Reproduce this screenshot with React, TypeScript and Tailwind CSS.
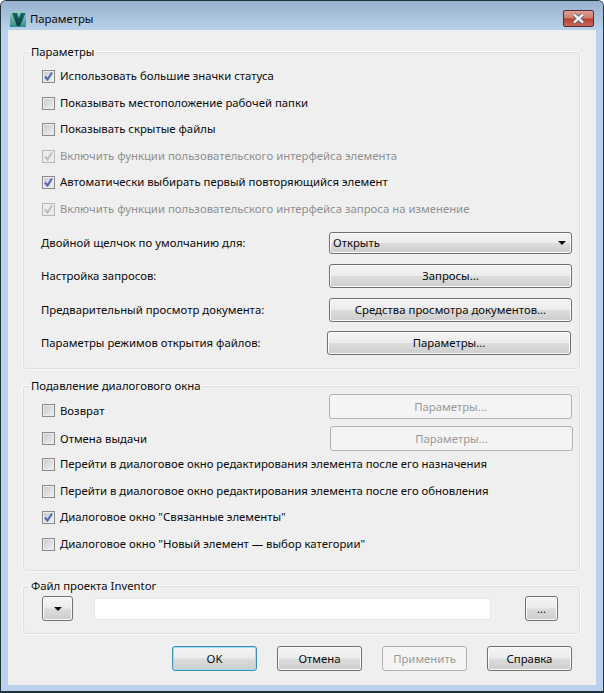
const btnFace =
  "bg-[linear-gradient(to_bottom,#f4f4f4_0%,#ececec_48%,#dcdcdc_52%,#cdcdcd_100%)] shadow-[inset_0_0_0_1px_#fafafa]"

function CheckRow({ label, checked, disabled, className }: { label: string; checked?: boolean; disabled?: boolean; className: string }) {
  return (
    <div className={`flex items-center pl-[18px] ${className}`}>
      <span
        className={`flex h-[13px] w-[13px] shrink-0 items-center justify-center border ${
          disabled ? "border-[#b8b8b8] bg-[#ececec]" : "border-[#8a8a8a] bg-[linear-gradient(135deg,#c9c9cf,#f0f0f2)] shadow-[inset_0_0_0_1px_#ececec]"
        }`}
      >
        {checked && (
          <svg width="11" height="11" viewBox="0 0 11 11" fill="none">
            <path d="M2 5.5 L4.5 8.5 L9 1.5" stroke={disabled ? "#bdbdbd" : "#4f68b5"} strokeWidth="2" />
          </svg>
        )}
      </span>
      <span className={`ml-[5px] ${disabled ? "text-[#8f8f8f]" : "text-[#0b0b0b]"}`}>{label}</span>
    </div>
  )
}

function Btn({ label, className, disabled, primary }: { label: string; className: string; disabled?: boolean; primary?: boolean }) {
  const look = disabled
    ? "border-[#adb2b5] bg-[#f4f4f4] text-[#9a9a9a]"
    : primary
      ? "border-[#3a8fbd] text-[#0b0b0b] bg-[linear-gradient(to_bottom,#f4f4f4_0%,#ececec_48%,#dcdcdc_52%,#cdcdcd_100%)] shadow-[inset_0_0_0_1px_#9fdcf2]"
      : `border-[#707070] text-[#0b0b0b] ${btnFace}`
  return <div className={`flex items-center justify-center rounded-[3px] border ${look} ${className}`}>{label}</div>
}

function FormRow({ label, children, className }: { label: string; children: React.ReactNode; className: string }) {
  return (
    <div className={`flex items-center pl-[17px] ${className}`}>
      <span className="flex-1 text-[#0b0b0b]">{label}</span>
      {children}
    </div>
  )
}

function Group({ title, className, children }: { title: string; className: string; children: React.ReactNode }) {
  return (
    <fieldset className={`ml-[15px] mr-[16px] rounded-[3px] border border-[#dcdfe3] shadow-[0_0_0_1px_#fafafa] ${className}`}>
      <legend className="ml-[5px] px-[2px] leading-[16px] text-[#0b0b0b]">{title}</legend>
      {children}
    </fieldset>
  )
}

export default function App() {
  return (
    <div className="flex h-[693px] w-[604px] flex-col overflow-hidden rounded-t-[6px] border border-b-2 border-[#22343c] bg-[#b9d1ea] font-['Noto_Sans',sans-serif] text-[11.35px] leading-[16px]">
      <div className="flex h-[29px] shrink-0 items-start bg-[linear-gradient(to_bottom,#98b1cd,#b9d1ea)] pl-[9px] pr-[9px] pt-[9px]">
        <svg width="16" height="16" viewBox="0 0 16 16" className="mt-px shrink-0">
          <defs>
            <linearGradient id="logo" x1="0" y1="0" x2="0" y2="1">
              <stop offset="0" stopColor="#a9c9c6" />
              <stop offset="1" stopColor="#2f8f88" />
            </linearGradient>
            <linearGradient id="logo-v" x1="0" y1="0" x2="0" y2="1">
              <stop offset="0" stopColor="#0f6a68" />
              <stop offset="1" stopColor="#0a3c3e" />
            </linearGradient>
          </defs>
          <rect width="16" height="16" fill="url(#logo)" />
          <path d="M2 2 H7 L8.8 7.5 L10.8 2 H15.5 L9.8 15 H7 Z" fill="url(#logo-v)" />
        </svg>
        <span className="ml-[4px] mt-px text-[#0b0b0b]">Параметры</span>
        <div className="ml-auto flex h-[17px] w-[31px] items-center justify-center rounded-[2px] border border-[#5a2a30] bg-[linear-gradient(to_bottom,#e0a194_0%,#cf7b6c_48%,#b5402f_52%,#c9695a_100%)]">
          <svg width="13" height="11" viewBox="0 0 13 11">
            <path d="M2 1.5 L11 9.5 M11 1.5 L2 9.5" stroke="#4e5766" strokeWidth="4" />
            <path d="M2 1.5 L11 9.5 M11 1.5 L2 9.5" stroke="#eef0f4" strokeWidth="2.4" />
          </svg>
        </div>
      </div>

      <div className="mx-[7px] flex h-[655px] shrink-0 flex-col bg-[#efefef] pt-[14px]">
        <Group title="Параметры" className="h-[325px]">
          <CheckRow label="Использовать большие значки статуса" checked className="mt-[8px] h-[16px]" />
          <CheckRow label="Показывать местоположение рабочей папки" className="mt-[11px] h-[16px]" />
          <CheckRow label="Показывать скрытые файлы" className="mt-[10px] h-[16px]" />
          <CheckRow label="Включить функции пользовательского интерфейса элемента" checked disabled className="mt-[11px] h-[16px]" />
          <CheckRow label="Автоматически выбирать первый повторяющийся элемент" checked className="mt-[10px] h-[16px]" />
          <CheckRow label="Включить функции пользовательского интерфейса запроса на изменение" checked disabled className="mt-[11px] h-[16px]" />
          <FormRow label="Двойной щелчок по умолчанию для:" className="mt-[15px] h-[22px] pr-[7px]">
            <div className={`flex h-[22px] w-[243px] items-center rounded-[3px] border border-[#707070] pl-[3px] pr-[5px] text-[#0b0b0b] ${btnFace}`}>
              <span className="flex-1">Открыть</span>
              <span className="h-0 w-0 border-x-[4px] border-t-[4px] border-x-transparent border-t-[#111]" />
            </div>
          </FormRow>
          <FormRow label="Настройка запросов:" className="mt-[10px] h-[24px] pr-[7px]">
            <Btn label="Запросы..." className="h-[24px] w-[243px]" />
          </FormRow>
          <FormRow label="Предварительный просмотр документа:" className="mt-[10px] h-[24px] pr-[7px]">
            <Btn label="Средства просмотра документов..." className="h-[24px] w-[243px]" />
          </FormRow>
          <FormRow label="Параметры режимов открытия файлов:" className="mt-[9px] h-[24px] pr-[8px]">
            <Btn label="Параметры..." className="h-[24px] w-[244px]" />
          </FormRow>
        </Group>

        <Group title="Подавление диалогового окна" className="mt-[9px] h-[193px]">
          <div className="flex h-[25px] items-center pr-[7px]">
            <CheckRow label="Возврат" className="mt-[8px] h-[16px] flex-1" />
            <Btn label="Параметры..." disabled className="h-[25px] w-[243px]" />
          </div>
          <div className="mt-[7px] flex h-[25px] items-center pr-[6px]">
            <CheckRow label="Отмена выдачи" className="h-[16px] flex-1" />
            <Btn label="Параметры..." disabled className="h-[25px] w-[243px]" />
          </div>
          <CheckRow label="Перейти в диалоговое окно редактирования элемента после его назначения" className="mt-[5px] h-[16px]" />
          <CheckRow label="Перейти в диалоговое окно редактирования элемента после его обновления" className="mt-[11px] h-[16px]" />
          <CheckRow label='Диалоговое окно "Связанные элементы"' checked className="mt-[10px] h-[16px]" />
          <CheckRow label='Диалоговое окно "Новый элемент — выбор категории"' className="mt-[11px] h-[16px]" />
        </Group>

        <Group title="Файл проекта Inventor" className="mt-[7px] h-[56px]">
          <div className="mt-[2px] flex items-center pl-[18px]">
            <div className={`flex h-[25px] w-[31px] items-center justify-center rounded-[3px] border border-[#707070] ${btnFace}`}>
              <span className="h-0 w-0 border-x-[4px] border-t-[4px] border-x-transparent border-t-[#111]" />
            </div>
            <div className="ml-[21px] h-[22px] w-[397px] rounded-[2px] border border-[#e4e7ea] bg-white" />
            <Btn label="..." className="ml-[34px] h-[25px] w-[33px]" />
          </div>
        </Group>

        <div className="mt-[12px] flex items-center pl-[164px]">
          <Btn label="OK" primary className="h-[25px] w-[85px]" />
          <Btn label="Отмена" className="ml-[20px] h-[25px] w-[85px]" />
          <Btn label="Применить" disabled className="ml-[20px] h-[25px] w-[85px]" />
          <Btn label="Справка" className="ml-[20px] h-[25px] w-[85px]" />
        </div>
      </div>
    </div>
  )
}
